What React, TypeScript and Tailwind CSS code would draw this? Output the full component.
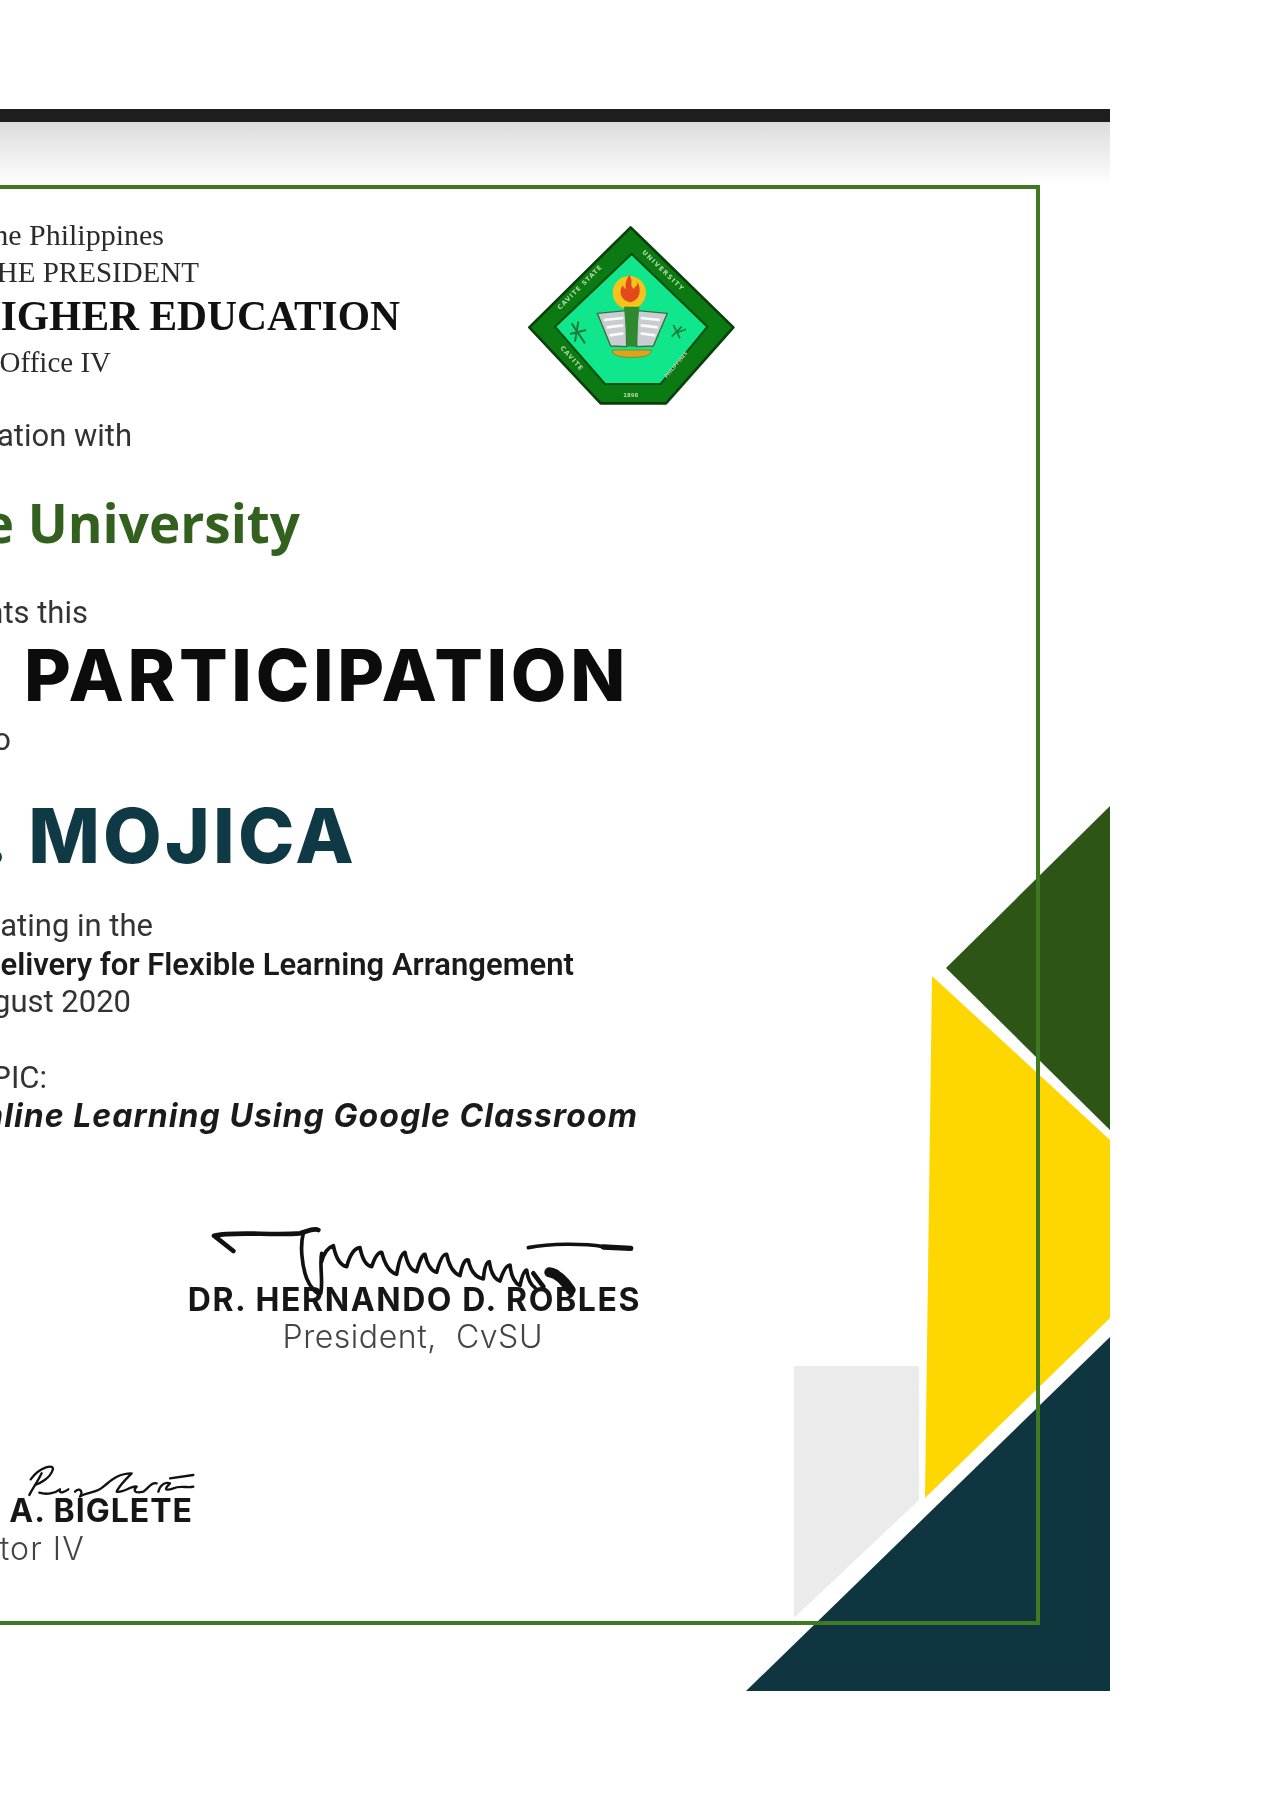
// Certificate of participation, cropped at the left edge of the page

const SERIF = "[font-family:'Liberation_Serif',serif]";
const ROBOTO = "[font-family:Roboto,sans-serif]";
const INTER = "[font-family:Inter,sans-serif]";

function Line({ className, children }: { className: string; children: React.ReactNode }) {
  return (
    <div className={"flex justify-end whitespace-pre " + className}>
      <span className="shrink-0">{children}</span>
    </div>
  );
}

function ArtBackdrop() {
  return (
    <svg className="absolute left-0 top-0" width="1110" height="1582" viewBox="0 109 1110 1582" aria-hidden="true">
      <polygon points="794,1366 919,1366 919,1500 794,1618" fill="#ebebeb" />
      <polygon points="1110,806 946,968 1110,1130" fill="#2d5516" />
      <polygon points="932,976 1110,1140 1110,1318 925,1498" fill="#fed700" />
      <polygon points="746,1691 1110,1337 1110,1691" fill="#0f3540" />
    </svg>
  );
}

function Seal() {
  return (
    <svg className="shrink-0 ml-[110px] -mt-[7px] -mb-[37px]" width="240" height="210" viewBox="0 0 720 630" aria-hidden="true">
      <polygon points="362,52 670,352 468,580 272,580 58,352" fill="#0b7a12" stroke="#0a3f0c" strokeWidth="8" strokeLinejoin="round" />
      <polygon points="365,132 592,350 452,522 285,522 135,350" fill="#10e78c" stroke="#08500f" strokeWidth="6" />
      <g fill="#b9d8a8" fontFamily="DejaVu Sans, sans-serif" fontSize="19" fontWeight="700">
        <text x="395" y="128" transform="rotate(44 395 128)" letterSpacing="4">UNIVERSITY</text>
        <text x="150" y="300" transform="rotate(-45 150 300)" letterSpacing="3">CAVITE STATE</text>
        <text x="340" y="562" fontSize="16">1898</text>
        <text x="150" y="415" transform="rotate(48 150 415)" letterSpacing="3">CAVITE</text>
        <text x="470" y="505" transform="rotate(-50 470 505)" fontSize="14">PHILIPPINES</text>
      </g>
      <circle cx="358" cy="248" r="50" fill="#f7c21a" />
      <path d="M358 195c14 22-2 30 14 42 4-10 12-10 10-22 14 26 8 54-20 62-28-4-38-30-24-52 2 8 6 10 10 12-4-16 2-30 10-42z" fill="#e2491b" />
      <path d="M262 310 348 302 350 410 302 408z" fill="#c9cdd2" stroke="#3d6b3a" strokeWidth="4" />
      <path d="M472 310 382 302 380 410 430 408z" fill="#c9cdd2" stroke="#3d6b3a" strokeWidth="4" />
      <path d="M282 330 340 324M290 352 340 346M298 376 340 370M450 330 392 324M444 352 392 346M436 376 392 370" stroke="#fafafa" strokeWidth="8" />
      <polygon points="342,290 388,290 378,410 352,410" fill="#2f8a2f" />
      <path d="M306 420h118c0 16-18 22-58 22s-60-6-60-22z" fill="#d9a520" stroke="#8f6d10" strokeWidth="2" />
      <path d="M185 340 225 400M205 335 195 395M180 372 228 360" stroke="#1c7a3a" strokeWidth="6" />
      <path d="M490 345 510 385M515 350 485 380M500 368 528 358" stroke="#1c7a3a" strokeWidth="5" />
    </svg>
  );
}

function RoblesSignature() {
  return (
    <svg className="absolute left-[216px] top-[1026px]" width="450" height="100" viewBox="0 0 1350 300" aria-hidden="true">
      <g fill="none" stroke="#111111" strokeLinecap="round" strokeLinejoin="round">
        <path d="M100 108 42 62C100 48 220 62 300 55 320 50 340 38 355 45" strokeWidth="14" />
        <path d="M310 55C300 90 305 150 320 190 330 215 350 240 362 235 370 200 358 150 365 115" strokeWidth="11" />
        <path
          d="M365 140Q375 100 400 92Q412 150 440 155Q455 100 480 98Q490 150 515 155Q530 110 545 112Q560 170 590 178Q600 115 615 112Q625 165 650 170Q665 115 675 118Q685 165 710 172Q725 115 740 118Q750 170 780 182Q790 130 805 135Q815 185 850 192Q855 140 868 140Q875 190 900 198Q915 150 930 150Q935 200 960 212Q970 165 980 165Q985 205 1005 218"
          strokeWidth="11"
        />
        <path d="M1000 175 1030 215" strokeWidth="14" />
        <path d="M1048 172C1075 175 1095 200 1112 225" strokeWidth="30" />
        <path d="M985 98C1050 85 1150 85 1210 95" strokeWidth="11" />
        <path d="M1210 96 1292 100" strokeWidth="16" />
      </g>
    </svg>
  );
}

function BigleteSignature() {
  return (
    <svg className="absolute left-[16px] top-[1261px]" width="220" height="80" viewBox="0 0 660 240" aria-hidden="true">
      <g fill="none" stroke="#111111" strokeWidth="7" strokeLinecap="round" strokeLinejoin="round">
        <path d="M92 88C120 50 165 40 158 60 150 85 120 100 105 105" />
        <path d="M125 70C110 100 95 120 88 135" />
        <path d="M118 128C140 135 165 130 180 118 175 135 195 125 205 118" />
        <path d="M225 125C240 110 250 125 240 140 260 125 290 130 310 110 330 95 350 70 395 70 370 95 355 110 350 125 370 130 395 105 410 110 395 125 410 130 430 125 445 115 455 95 470 100" />
        <path d="M475 125C480 105 495 95 510 100 495 115 490 125 520 115 540 105 565 115 580 110" />
        <path d="M510 85 580 75" />
      </g>
    </svg>
  );
}

export default function App() {
  return (
    <div className="w-[1273px] h-[1800px] overflow-hidden bg-white pt-[109px]">
      <div className="relative w-[1110px] h-[1582px] blur-[0.6px]">
        <ArtBackdrop />
        <div className="relative h-[13px] bg-[#1e1e1e]" />
        <div className="h-[63px] bg-gradient-to-b from-[#dcdcdc] to-white" />
        <div className="relative -ml-[20px] w-[1060px] h-[1440px] border-4 border-[#3f7a22] pt-[28px]">
          <div className="flex">
            <div className="w-[416px] shrink-0">
              <Line className={SERIF + " pr-[236px] text-[30px] leading-[36px] text-[#2b2b2b]"}>Republic of the Philippines</Line>
              <Line className={SERIF + " pr-[201px] text-[29px] leading-[38px] text-[#2b2b2b]"}>OFFICE OF THE PRESIDENT</Line>
              <Line className={SERIF + " text-[41.5px] leading-[50px] font-bold text-[#111111]"}>COMMISSION ON HIGHER EDUCATION</Line>
              <Line className={SERIF + " pr-[289px] text-[29px] leading-[42px] text-[#2b2b2b]"}>Regional Office IV</Line>
            </div>
            <Seal />
          </div>
          <Line className={ROBOTO + " mt-[33px] pr-[904px] text-[31px] leading-[40px] text-[#333333]"}>in cooperation with</Line>
          <Line className="mt-[32px] pr-[736px] [font-family:'Open_Sans',sans-serif] text-[53px] leading-[70px] font-bold text-[#33601f]">Cavite State University</Line>
          <Line className={ROBOTO + " mt-[37px] pr-[948px] text-[31px] leading-[36px] text-[#333333]"}>presents this</Line>
          <Line className={INTER + " mt-[4px] pr-[407px] text-[72px] tracking-[3.7px] leading-[80px] font-extrabold text-[#0c0c0c]"}>OF PARTICIPATION</Line>
          <Line className={ROBOTO + " mt-[7px] pr-[1025px] text-[31px] leading-[36px] text-[#333333]"}>to</Line>
          <Line className={INTER + " mt-[37px] pr-[679px] text-[76px] tracking-[3.2px] leading-[80px] font-extrabold text-[#0f3a45]"}>A. MOJICA</Line>
          <Line className={ROBOTO + " mt-[33px] pr-[883px] text-[31px] leading-[36px] text-[#333333]"}>for participating in the</Line>
          <Line className={ROBOTO + " mt-[3px] pr-[462px] text-[31px] leading-[36px] font-semibold text-[#1a1a1a]"}>Delivery for Flexible Learning Arrangement</Line>
          <Line className={ROBOTO + " mt-[1px] pr-[905px] text-[31px] leading-[36px] text-[#333333]"}>August 2020</Line>
          <Line className={ROBOTO + " mt-[40px] pr-[989px] text-[31px] leading-[36px] text-[#333333]"}>TOPIC:</Line>
          <Line className={INTER + " mt-[2px] pr-[398px] text-[32px] tracking-[1.05px] leading-[36px] font-bold italic text-[#1a1a1a]"}>Online Learning Using Google Classroom</Line>
          <Line className={INTER + " mt-[146px] pr-[395px] text-[32px] tracking-[1.6px] leading-[40px] font-bold text-[#161616]"}>DR. HERNANDO D. ROBLES</Line>
          <Line className={INTER + " pr-[493px] text-[32px] tracking-[0.55px] leading-[34px] font-light text-[#444444]"}>President,  CvSU</Line>
          <Line className={INTER + " mt-[137px] pr-[843px] text-[32px] tracking-[1px] leading-[40px] font-bold text-[#161616]"}>. A. BIGLETE</Line>
          <Line className={INTER + " pr-[951px] text-[32px] tracking-[1.1px] leading-[36px] font-light text-[#444444]"}>Director IV</Line>
          <RoblesSignature />
          <BigleteSignature />
        </div>
      </div>
    </div>
  );
}
